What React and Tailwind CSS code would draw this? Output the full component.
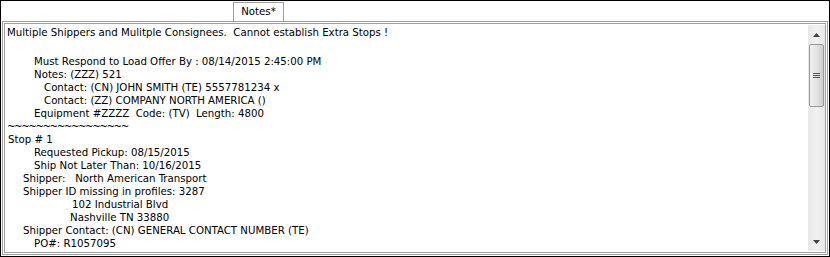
const lines = [
  { text: 'Multiple Shippers and Mulitple Consignees.  Cannot establish Extra Stops !', pad: 'pl-[2px]' },
  { text: ' ', pad: 'pl-[2px] h-[16px]' },
  { text: 'Must Respond to Load Offer By : 08/14/2015 2:45:00 PM', pad: 'pl-[29px]' },
  { text: 'Notes: (ZZZ) 521', pad: 'pl-[29px]' },
  { text: 'Contact: (CN) JOHN SMITH (TE) 5557781234 x', pad: 'pl-[39px]' },
  { text: 'Contact: (ZZ) COMPANY NORTH AMERICA ()', pad: 'pl-[39px]' },
  { text: 'Equipment #ZZZZ  Code: (TV)  Length: 4800', pad: 'pl-[29px]' },
  { text: '~~~~~~~~~~~~~~~~~', pad: 'pl-[2px] tracking-[-1.45px]' },
  { text: 'Stop # 1', pad: 'pl-[3px]' },
  { text: 'Requested Pickup: 08/15/2015', pad: 'pl-[29px]' },
  { text: 'Ship Not Later Than: 10/16/2015', pad: 'pl-[29px]' },
  { text: 'Shipper:   North American Transport', pad: 'pl-[18px]' },
  { text: 'Shipper ID missing in profiles: 3287', pad: 'pl-[18px]' },
  { text: '102 Industrial Blvd', pad: 'pl-[67px]' },
  { text: 'Nashville TN 33880', pad: 'pl-[65px]' },
  { text: 'Shipper Contact: (CN) GENERAL CONTACT NUMBER (TE)', pad: 'pl-[18px]' },
  { text: 'PO#: R1057095', pad: 'pl-[29px]' },
]

const ScrollBar = () => (
  <div className="w-[17px] my-[1px] flex flex-col bg-gradient-to-r from-[#e8e8e8] via-[#f0f0f0] to-[#e8e8e8]">
    <div className="h-[19px] flex items-center justify-center">
      <svg width="7" height="4" viewBox="0 0 7 4">
        <path d="M3.5 0 L7 4 L0 4 Z" fill="#404040" />
      </svg>
    </div>
    <div className="mx-[1px] h-[63px] rounded-[2px] border border-[#9a9a9a] bg-gradient-to-r from-[#f0f0f0] via-[#e4e4e4] to-[#cfcfcf] flex items-center justify-center">
      <div className="flex flex-col gap-[1px]">
        <div className="w-[7px] h-[1px] bg-[#555]" />
        <div className="w-[7px] h-[1px] bg-[#555]" />
        <div className="w-[7px] h-[1px] bg-[#555]" />
      </div>
    </div>
    <div className="flex-1" />
    <div className="h-[19px] flex items-center justify-center">
      <svg width="7" height="4" viewBox="0 0 7 4">
        <path d="M0 0 L7 0 L3.5 4 Z" fill="#404040" />
      </svg>
    </div>
  </div>
)

export default function App() {
  return (
    <div
      className="w-[830px] h-[257px] border border-black bg-white flex flex-col text-black"
      style={{ fontFamily: '"DejaVu Sans Condensed", Tahoma, "DejaVu Sans", sans-serif' }}
    >
      <div className="h-[20px] flex items-end pl-[232px]">
        <div className="w-[51px] h-[19px] border border-b-0 border-[#a0a0a0] bg-white text-[11.35px] leading-[17px] text-center">
          Notes*
        </div>
      </div>
      <div className="mx-[1px] h-[234px] border border-[#a0a0a0] p-[1px]">
        <div className="h-full border border-[#a0a0a0] flex">
          <div className="flex-1 pt-[2px] text-[11.35px] leading-[13px] whitespace-pre overflow-hidden">
            {lines.map((l, i) => (
              <div key={i} className={l.pad}>{l.text}</div>
            ))}
          </div>
          <ScrollBar />
        </div>
      </div>
    </div>
  )
}
